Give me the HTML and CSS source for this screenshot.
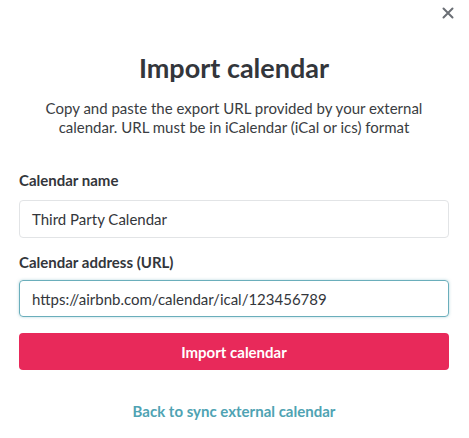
FILE: index.html
```html
<!DOCTYPE html>
<html>
<head>
<meta charset="utf-8">
<link rel="stylesheet" href="styles.css">
</head>
<body>
<div class="modal">
  <button class="close" aria-label="Close">
    <svg width="12" height="12" viewBox="0 0 12 12"><path d="M1.5 1.5L10.5 10.5M10.5 1.5L1.5 10.5" stroke="#6b6f75" stroke-width="2" stroke-linecap="round"/></svg>
  </button>
  <h1 class="title">Import calendar</h1>
  <p class="desc">Copy and paste the export URL provided by your external calendar. URL must be in iCalendar (iCal or ics) format</p>
  <form class="form">
    <label class="label">Calendar name</label>
    <div class="input">Third Party Calendar</div>
    <label class="label">Calendar address (URL)</label>
    <div class="input focused">https://airbnb.com/calendar/ical/123456789</div>
    <div class="button">Import calendar</div>
  </form>
  <a class="back">Back to sync external calendar</a>
</div>
</body>
</html>
```
FILE: styles.css
```css
html, body { margin: 0; padding: 0; background: #fff; }
body { font-family: Lato, "Open Sans", sans-serif; color: #33363b; }
.modal { position: relative; width: 469px; height: 438px; box-sizing: border-box; padding: 0 20px 0 19px; display: flex; flex-direction: column; }
.close { position: absolute; top: 7px; right: 15px; border: 0; background: none; padding: 0; width: 12px; height: 12px; }
.close svg { display: block; }
.title { margin: 50px 0 0; font-size: 27px; line-height: 36px; font-weight: 700; text-align: center; color: #33363b; }
.desc { margin: 13px 0 0; font-size: 15px; line-height: 19px; text-align: center; color: #3a3d42; padding: 0 20px; }
.form { display: flex; flex-direction: column; margin-top: 33px; }
.label { font-size: 15px; line-height: 20px; font-weight: 700; color: #33363b; }
.input { margin-top: 10px; height: 38px; box-sizing: border-box; border: 1px solid #e2e4e6; border-radius: 4px; padding: 0 12px; display: flex; align-items: center; font-size: 15px; color: #33363b; margin-bottom: 14px; }
.input.focused { border-color: #6aaebb; box-shadow: 0 0 3px rgba(106,174,187,0.5); margin-bottom: 0; margin-top: 8px; height: 37px; }
.button { margin-top: 16px; height: 37px; border-radius: 4px; background: #e8295a; color: #fff; font-weight: 700; font-size: 15px; display: flex; align-items: center; justify-content: center; }
.back { margin-top: 32px; text-align: center; font-size: 15px; font-weight: 700; color: #4fa3b3; }
```
